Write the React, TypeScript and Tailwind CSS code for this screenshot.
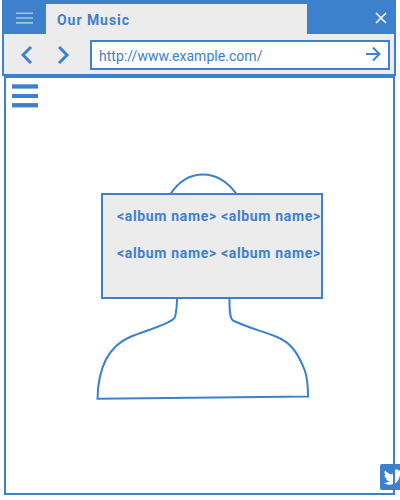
import React from "react";

const albumRows = [
  ["<album name>", "<album name>"],
  ["<album name>", "<album name>"],
];

function Bars() {
  return (
    <svg className="block" width="26" height="24" viewBox="0 0 26 24" fill="#3d80cb">
      <rect x="0" y="0.3" width="26" height="4.3" />
      <rect x="0" y="10" width="26" height="4" />
      <rect x="0" y="19.1" width="26" height="4.3" />
    </svg>
  );
}

function BrowserHeader() {
  return (
    <header className="ml-[2px] h-[76px] w-[394px] border-2 border-[#3d80cb] bg-[#ececec]">
      <div className="flex h-8 w-full bg-[#3d80cb]">
        <button className="flex w-[42px] items-start pt-[9px] pl-3" aria-label="Menu">
          <svg width="17" height="14" viewBox="0 0 17 14" fill="none" stroke="#a3c4e8" strokeWidth="1.6">
            <path d="M0 2.300h17M0 7h17M0 11.900h17" />
          </svg>
        </button>
        <div className="mt-[2px] w-[261px] bg-[#ececec] pl-[11px] text-[14px] leading-[32px] font-bold tracking-[0.95px]">
          Our Music
        </div>
        <button className="ml-[68px] flex items-start pt-[10px]" aria-label="Close">
          <svg width="12" height="12" viewBox="0 0 12 12" fill="none" stroke="#f3f7fc" strokeWidth="1.7">
            <path d="M1 1l10 10M11 1L1 11" />
          </svg>
        </button>
      </div>
      <div className="flex h-10 items-center pt-[2px] pl-[17px]">
        <svg width="12" height="18" viewBox="0 0 12 18" fill="none" stroke="#3d80cb" strokeWidth="3">
          <path d="M10 1L2 9l8 8" />
        </svg>
        <svg className="ml-[25px]" width="12" height="18" viewBox="0 0 12 18" fill="none" stroke="#3d80cb" strokeWidth="3">
          <path d="M1 1l8 8-8 8" />
        </svg>
        <div className="ml-5 flex h-[30px] w-[300px] items-center justify-between border-2 border-[#3d80cb] bg-white pr-[6px] pl-[7px]">
          <span className="pt-[2px] text-[14px] tracking-[0.04px]">http://www.example.com/</span>
          <svg width="17" height="16" viewBox="0 0 17 16" fill="none" stroke="#3d80cb" strokeWidth="1.900">
            <path d="M1 7h14M8 0.500L14.500 7 8 13.500" />
          </svg>
        </div>
      </div>
    </header>
  );
}

export default function App() {
  return (
    <div className="relative h-[500px] w-[400px] overflow-hidden bg-white font-['Roboto','Liberation_Sans',sans-serif] text-[#3d80cb]">
      <BrowserHeader />
      <main className="ml-1 h-[419px] w-[391px] border-2 border-[#3d80cb]">
        <div className="pt-[6px] pl-[6px]">
          <Bars />
        </div>
      </main>
      <svg className="absolute top-0 left-0" width="400" height="500" viewBox="0 0 400 500" fill="none" stroke="#3d80cb" strokeWidth="2">
        <path d="M170.500 194C179 181 191 174.500 203 174.500C215 174.500 227 181 236.500 194" />
        <path d="M177 297C177 305 176.300 312 175 317C173 323 147 330 130 337C107 347 98 371 97.500 398.800L308 396.500C308 387 307.500 379 305 371C297 350 289 342 277 337C262 331 249 328 234 321C229 320 229.500 306 229.500 297" />
      </svg>
      <section className="absolute top-[193px] left-[101px] flex h-[106px] w-[222px] flex-col border-2 border-[#3d80cb] bg-[#ececec] pt-[11px] pl-[14px]">
        {albumRows.map((row, i) => (
          <div key={i} className="flex h-[37px] gap-1 text-[14px] leading-5 font-bold tracking-[0.66px] whitespace-nowrap">
            {row.map((name, j) => (
              <span key={j} className="w-[100px] shrink-0">{name}</span>
            ))}
          </div>
        ))}
      </section>
      <svg className="absolute top-[464px] left-[380px]" width="26" height="26" viewBox="0 0 26 26">
        <rect width="26" height="26" rx="2" fill="#3d80cb" />
        <path fill="white" d="M4 19c2 0 4-.5 5.500-1.700-1.700 0-3-1-3.500-2.500h1.500C5.800 14.400 4.500 13 4.500 11l1.600.5C4.500 10.300 4 8.200 5 6.500c2 2.400 4.700 3.800 7.800 4C12.200 7.800 14 5.500 16.500 5.500c1.200 0 2 .4 2.800 1.200l2.200-.9-1.500 2 2-.5-1.900 1.900C20.100 15.500 16 20.700 9.500 20.700 7.500 20.700 5.600 20.100 4 19z" />
      </svg>
      <div className="absolute top-[464px] left-[393px] h-[30px] w-[2px] bg-[#3d80cb]" />
    </div>
  );
}
